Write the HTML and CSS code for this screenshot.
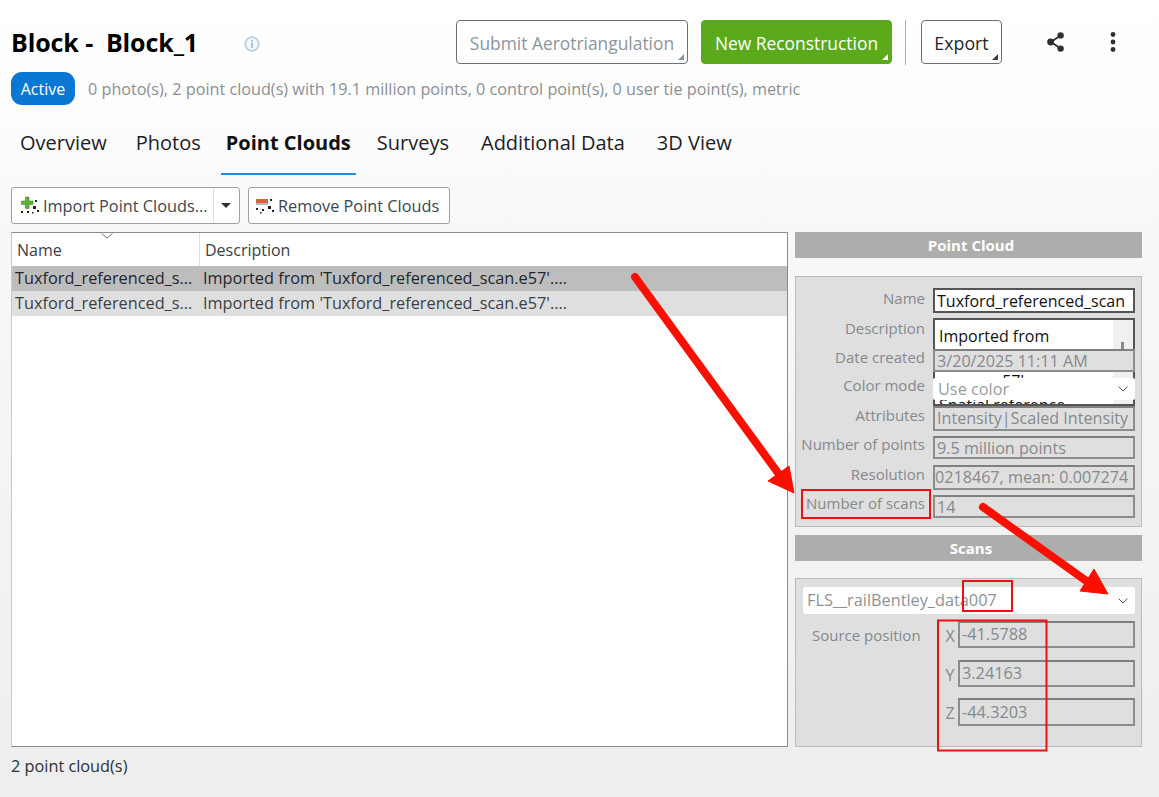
FILE: index.html
```html
<!DOCTYPE html>
<html lang="en">
<head>
<meta charset="utf-8">
<title>Block - Block_1</title>
<link rel="stylesheet" href="styles.css">
</head>
<body>
<div class="page">
  <header class="head-row">
    <h1 class="title">Block -&nbsp; Block_1</h1>
    <svg class="info" viewBox="0 0 16 16" width="16" height="16"><circle cx="8" cy="8" r="6.8" fill="#f4f8fb" stroke="#bcd2e4" stroke-width="1.8"/><rect x="7.2" y="6.8" width="1.6" height="5" fill="#8fb3d0"/><rect x="7.2" y="4" width="1.6" height="1.6" fill="#8fb3d0"/></svg>
    <div class="actions">
      <button class="btn btn-disabled">Submit Aerotriangulation<i class="corner"></i></button>
      <button class="btn btn-primary">New Reconstruction<i class="corner"></i></button>
      <span class="vsep"></span>
      <button class="btn btn-export">Export<i class="corner"></i></button>
      <svg class="share" viewBox="0 0 20 22" width="20" height="22"><path d="M14.500 4.500 5 11l9.500 6.500" fill="none" stroke="#2b2f36" stroke-width="1.8"/><circle cx="14.600" cy="4.400" r="3.200" fill="#2b2f36"/><circle cx="4.600" cy="11" r="3.400" fill="#2b2f36"/><circle cx="14.600" cy="17.600" r="3.200" fill="#2b2f36"/></svg>
      <svg class="kebab" viewBox="0 0 6 22" width="6" height="22"><circle cx="3" cy="3.500" r="2.400" fill="#2b2f36"/><circle cx="3" cy="11" r="2.400" fill="#2b2f36"/><circle cx="3" cy="18.500" r="2.400" fill="#2b2f36"/></svg>
    </div>
  </header>
  <div class="sub-row">
    <span class="pill">Active</span>
    <span class="summary">0 photo(s), 2 point cloud(s) with 19.1 million points, 0 control point(s), 0 user tie point(s), metric</span>
  </div>
  <nav class="tabs">
    <a class="tab t-overview">Overview</a>
    <a class="tab t-photos">Photos</a>
    <a class="tab t-clouds active">Point Clouds</a>
    <a class="tab t-surveys">Surveys</a>
    <a class="tab t-additional">Additional Data</a>
    <a class="tab t-3d">3D View</a>
  </nav>
  <div class="toolbar">
    <div class="tool split">
      <span class="tool-main">
        <svg class="tool-icon" viewBox="0 0 20 20" width="20" height="20"><path d="M5.500 1h3.500v4h4v3.500H9v4H5.500v-4h-4V5h4z" fill="#5cb335" stroke="#3c8a22" stroke-width=".6"/><g fill="#222"><rect x="15" y="4" width="2" height="2"/><rect x="13" y="10" width="3" height="3"/><rect x="17" y="14" width="2" height="2"/><rect x="1" y="15" width="2" height="2"/><rect x="7" y="15" width="2" height="2"/><rect x="12" y="16" width="1.500" height="1.500"/></g></svg>Import Point Clouds...
      </span>
      <span class="tool-drop"><i class="down"></i></span>
    </div>
    <div class="tool remove">
      <svg class="tool-icon" viewBox="0 0 20 20" width="20" height="20"><rect x="1" y="3" width="12" height="4" fill="#e2613a"/><rect x="1" y="7" width="12" height="2" fill="#b9b9b9"/><g fill="#222"><rect x="15" y="3" width="2" height="2"/><rect x="13" y="10" width="3" height="3"/><rect x="17" y="14" width="2" height="2"/><rect x="1" y="12" width="2" height="2"/><rect x="7" y="13" width="2" height="2"/><rect x="5" y="16" width="1.500" height="1.500"/></g></svg>Remove Point Clouds
    </div>
  </div>
  <main class="main">
    <section class="table">
      <div class="thead">
        <div class="th col-name">Name<svg class="sort" viewBox="0 0 12 6" width="12" height="6"><path d="M.5.5 6 5 11.500.5" fill="none" stroke="#777"/></svg></div>
        <div class="th col-desc">Description</div>
      </div>
      <div class="tr selected"><div class="td col-name">Tuxford_referenced_s...</div><div class="td col-desc">Imported from 'Tuxford_referenced_scan.e57'....</div></div>
      <div class="tr alt"><div class="td col-name">Tuxford_referenced_s...</div><div class="td col-desc">Imported from 'Tuxford_referenced_scan.e57'....</div></div>
    </section>
    <aside class="side">
      <h2 class="bar">Point Cloud</h2>
      <div class="group props">
        <label class="lbl lbl-name">Name</label><div class="field f-name">Tuxford_referenced_scan</div>
        <label class="lbl lbl-up1">Description</label>
        <div class="desc-cell">
          <div class="desc">
            <div class="desc-text"><div class="desc-l1">Imported from</div><div class="desc-l2">.e57'</div><div class="desc-l3">Spatial reference</div></div>
            <div class="desc-scroll"><i></i></div>
          </div>
        </div>
        <label class="lbl">Date created</label><div class="field h23">3/20/2025 11:11 AM</div>
        <label class="lbl lbl-up3">Color mode</label><div class="combo h23">Use color<svg class="chev" viewBox="0 0 10 6" width="10" height="6"><path d="M.5.5 5 5 9.500.5" fill="none" stroke="#555"/></svg></div>
        <label class="lbl lbl-up1">Attributes</label><div class="field">Intensity|Scaled Intensity</div>
        <label class="lbl">Number of points</label><div class="field h23">9.5 million points</div>
        <label class="lbl lbl-up1">Resolution</label><div class="field f-res">0218467, mean: 0.007274</div>
        <label class="lbl">Number of scans</label><div class="field h23">14</div>
      </div>
      <h2 class="bar bar-scans">Scans</h2>
      <div class="group scans">
        <div class="combo combo-scan">FLS__railBentley_data007<svg class="chev" viewBox="0 0 10 6" width="10" height="6"><path d="M.5.5 5 5 9.500.5" fill="none" stroke="#555"/></svg></div>
        <div class="pos">
          <span class="pos-title">Source position</span>
          <div class="coords">
            <span class="axis">X</span><div class="field coord">-41.5788</div>
            <span class="axis">Y</span><div class="field coord">3.24163</div>
            <span class="axis">Z</span><div class="field coord coord-z">-44.3203</div>
          </div>
        </div>
      </div>
    </aside>
  </main>
  <footer class="status">2 point cloud(s)</footer>
  <svg class="marks" viewBox="0 0 1159 797" width="1159" height="797">
    <g fill="none" stroke="#f10f0f" stroke-width="2">
      <rect x="802" y="490" width="128" height="28"/>
      <rect x="963" y="581" width="49" height="30"/>
      <rect x="938" y="620.500" width="108.500" height="130"/>
    </g>
    <g fill="#fb0f00" stroke="#fb0f00">
      <path d="M635 277 781 477" stroke-width="8" stroke-linecap="round" fill="none"/>
      <path d="M794 493 768 481 789 466z" stroke-width="1"/>
      <path d="M983 507 1092 585" stroke-width="8" stroke-linecap="round" fill="none"/>
      <path d="M1108 594 1080 591 1094 569z" stroke-width="1"/>
    </g>
  </svg>
</div>
</body>
</html>
```
FILE: styles.css
```css
* { box-sizing: border-box; }
html, body { margin: 0; padding: 0; }
body {
  font-family: "Open Sans", "Noto Sans", sans-serif;
  color: #333;
  overflow: hidden;
}
.page {
  position: relative;
  width: 1159px;
  height: 797px;
  padding: 20px 0 0;
  display: flex;
  flex-direction: column;
  background: linear-gradient(#ffffff 0, #fdfdfd 110px, #f8f8f8 230px, #eeeeee 780px);
}
.head-row {
  display: flex;
  align-items: center;
  height: 45px;
  padding-left: 11px;
}
.title {
  margin: 0;
  font-size: 25px;
  font-weight: 700;
  color: #000;
  width: 233px;
  line-height: 45px;
  white-space: nowrap;
  letter-spacing: -.1px;
}
.info { margin-top: 2px; }
.actions {
  position: absolute;
  left: 456px;
  top: 20px;
  display: flex;
  align-items: flex-start;
}
.btn {
  position: relative;
  height: 44px;
  border-radius: 4px;
  font: 400 17.4px "Open Sans", sans-serif;
  padding: 2px 0 0;
  background: #fff;
  border: 1px solid #6a7078;
  color: #22262c;
  white-space: nowrap;
}
.btn-disabled { width: 232px; color: #8d949c; }
.btn-primary { width: 191px; margin-left: 13px; background: #5aaa1b; border-color: #5aaa1b; color: #fff; }
.btn-export { width: 81px; font-size: 17.8px; }
.corner {
  position: absolute;
  right: 3px;
  bottom: 3px;
  width: 0;
  height: 0;
  border-style: solid;
  border-width: 0 0 6px 6px;
  border-color: transparent transparent #8d949c transparent;
}
.btn-primary .corner { border-bottom-color: #fff; }
.btn-export .corner { border-bottom-color: #3a3f46; }
.vsep { width: 1px; height: 45px; background: #a9adb2; margin: 0 15px 0 13px; }
.share { margin: 11px 0 0 44px; }
.kebab { margin: 11px 0 0 44px; }
.sub-row {
  display: flex;
  align-items: center;
  height: 33px;
  margin: 7px 0 0 11px;
}
.pill {
  width: 64px;
  height: 33px;
  border-radius: 11px;
  background: #0a78d2;
  color: #fff;
  font-size: 16px;
  line-height: 35px;
  text-align: center;
}
.summary { margin-left: 13px; font-size: 16.22px; color: #8b8f94; white-space: nowrap; }
.tabs {
  display: flex;
  height: 55px;
  margin-top: 15px;
  padding-left: 14px;
}
.tab {
  padding: 7px 5px 0;
  height: 55px;
  font-size: 20px;
  line-height: 32px;
  color: #1d2126;
  white-space: nowrap;
  border-bottom: 2px solid transparent;
}
.t-overview { margin-left: 1px; }
.t-photos { margin-left: 19px; }
.t-clouds { margin-left: 15px; }
.t-surveys { margin-left: 16px; }
.t-additional { margin-left: 22px; }
.t-3d { margin-left: 22px; }
.tab.active { font-weight: 700; color: #111; border-bottom-color: #1a8fe0; }
.toolbar {
  display: flex;
  gap: 8px;
  margin: 12px 0 0 11px;
  height: 37px;
}
.tool {
  display: flex;
  align-items: center;
  height: 37px;
  background: #fff;
  border: 1px solid #9aa3ab;
  border-radius: 3px;
  font-size: 16.3px;
  color: #3c4650;
  white-space: nowrap;
}
.split { width: 229px; }
.tool-main { display: flex; align-items: center; width: 201px; height: 100%; padding-left: 8px; }
.tool-drop { display: flex; align-items: center; justify-content: center; flex: 1; height: 100%; padding-right: 2px; border-left: 1px solid #dcdcdc; }
.down { width: 0; height: 0; border-style: solid; border-width: 5px 5px 0; border-color: #333 transparent transparent; }
.remove { width: 202px; padding-left: 6px; }
.tool-icon { margin-right: 3px; flex: none; }
.main {
  display: flex;
  margin: 8px 0 0 11px;
  height: 515px;
}
.table {
  width: 777px;
  background: #fff;
  border: 1px solid #8a8d90;
  border-left-color: #c9c9c9;
  font-size: 16.3px;
  color: #3a3f46;
}
.thead { display: flex; height: 33px; align-items: flex-end; }
.th { height: 33px; line-height: 34px; padding-top: 0; position: relative; }
.thead .col-name { padding-left: 5px; border-right: 1px solid #e0e0e0; font-size: 16px; }
.thead .col-desc { padding-left: 5px; font-size: 16px; }
.col-name { width: 188px; flex: none; white-space: nowrap; overflow: hidden; }
.sort { position: absolute; left: 89px; top: 0; }
.th.col-name { overflow: visible; }
.tr { display: flex; height: 25px; line-height: 24px; }
.td.col-name { padding-left: 3px; }
.td.col-desc { padding-left: 3px; white-space: nowrap; }
.selected { background: #bdbdbd; color: #22262c; }
.alt { background: #dfdfdf; }
.side {
  width: 347px;
  margin-left: 7px;
  display: flex;
  flex-direction: column;
}
.bar {
  margin: 0;
  height: 26px;
  padding-left: 5px;
  background: #adadad;
  color: #fff;
  font-size: 15px;
  font-weight: 700;
  line-height: 27px;
  text-align: center;
}
.group {
  background: #dfdfdf;
  border: 1px solid #bbbbbb;
  font-size: 15px;
  color: #85898d;
}
.props {
  height: 251px;
  margin-top: 18px;
  padding: 11px 6px 0 0;
  display: grid;
  grid-template-columns: 129px 202px;
  grid-template-rows: 31px 30px 29px 28px 30px 29px 30px 23px;
  column-gap: 8px;
}
.lbl { text-align: right; line-height: 20px; white-space: nowrap; color: #85898d; margin-top: -2px; }
.lbl-name { margin-top: 0; }
.lbl-up1 { margin-top: -1px; }
.lbl-up3 { margin-top: -3px; }
.field {
  height: 25px;
  border: 2px solid #8d8d8d;
  border-top-color: #7f7f7f;
  background: #dfdfdf;
  padding: 0 0 0 2px;
  font-size: 16.15px;
  line-height: 20px;
  color: #85898d;
  white-space: nowrap;
  overflow: hidden;
}
.h23 { height: 23px; line-height: 20px; }
.f-name { background: #fff; border-color: #555; color: #111; font-size: 16px; line-height: 22px; }
.f-res { padding-left: 0; }
.desc-cell { position: relative; }
.desc {
  position: absolute;
  left: 0;
  top: -1px;
  width: 202px;
  height: 88px;
  background: #fff;
  border: 2px solid #555;
  display: flex;
  overflow: hidden;
  color: #111;
  font-size: 16px;
}
.desc-text { flex: 1; padding: 5px 0 0 4px; line-height: 22px; white-space: nowrap; }
.desc-l2 { margin-top: 23px; padding-left: 50px; }
.desc-l3 { margin-top: 2px; }
.desc-scroll { width: 20px; background: #f0f0f0; position: relative; }
.desc-scroll i { position: absolute; left: 8px; top: 22px; width: 3px; height: 20px; background: #8a8a8a; }
.h23, .combo { position: relative; }
.combo {
  display: block;
  background: #fff;
  border-radius: 2px;
  color: #9a9da0;
  font-size: 16.3px;
  line-height: 23px;
  padding-left: 5px;
  height: 22px;
}
.chev { position: absolute; right: 7px; top: 8px; }
.bar-scans { margin-top: 8px; line-height: 26px; }
.scans {
  height: 169px;
  margin-top: 17px;
  padding: 8px 6px 0 7px;
}
.combo-scan { height: 27px; line-height: 26px; color: #8f9295; padding-left: 4px; }
.combo-scan .chev { top: 11px; }
.pos { display: flex; margin-top: 7px; }
.pos-title { width: 139px; padding: 2px 0 0 9px; line-height: 24px; }
.coords {
  flex: none;
  display: grid;
  grid-template-columns: 16px 177px;
  grid-template-rows: 39px 38px 28px;
}
.axis { line-height: 30px; text-align: center; font-size: 16px; }
.coord { height: 27px; line-height: 23px; font-size: 16.3px; }
.coord-z { height: 28px; line-height: 25px; }
.status { margin: 9px 0 0 11px; font-size: 16.3px; color: #2c3036; line-height: 20px; }
.marks { position: absolute; left: 0; top: 0; pointer-events: none; }
```
